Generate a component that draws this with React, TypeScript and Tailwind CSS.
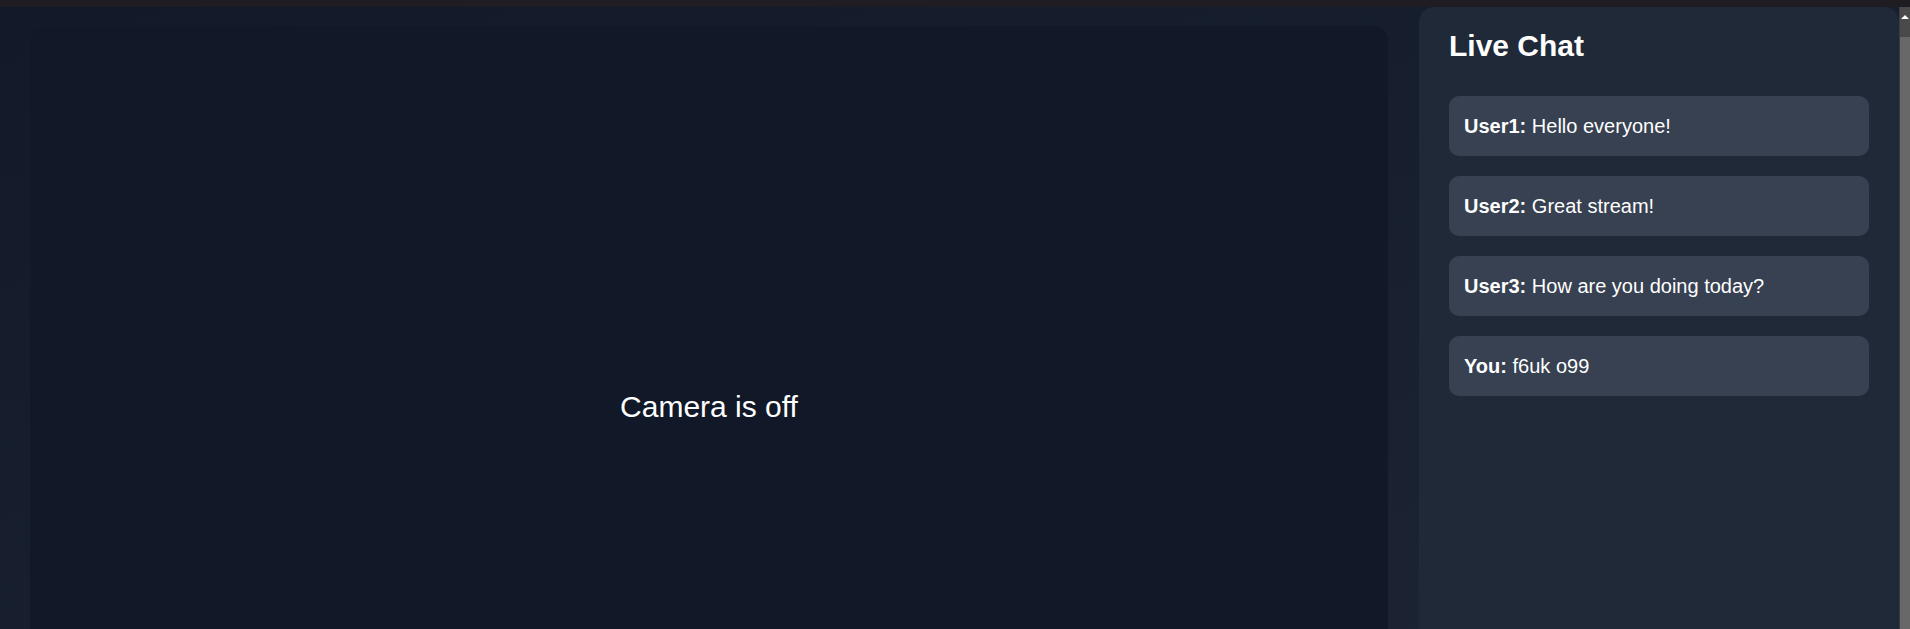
import React from "react";

const messages = [
  { user: "User1", text: "Hello everyone!" },
  { user: "User2", text: "Great stream!" },
  { user: "User3", text: "How are you doing today?" },
  { user: "You", text: "f6uk o99" },
];

export default function App() {
  return (
    <div
      className="h-[629px] w-full flex flex-col overflow-hidden text-white"
      style={{ fontFamily: '"Liberation Sans", Arial, sans-serif' }}
    >
      {/* window edge */}
      <div className="h-[7px] shrink-0 bg-[#1f1d21]" />

      <div className="flex flex-1 min-h-0">
        <main className="flex flex-1 items-start gap-[31px] pl-[30px] bg-gradient-to-br from-[#121a2a] to-[#1d2534] overflow-hidden">
          {/* Camera view */}
          <section className="mt-[19px] h-[762px] flex-1 rounded-[15px] bg-[#111827] flex items-center justify-center">
            <p className="text-[30px] leading-[36px]">Camera is off</p>
          </section>

          {/* Chat */}
          <aside className="w-[480px] shrink-0 h-[900px] rounded-t-[15px] bg-[#1f2937] px-[30px] pt-[19px]">
            <h2 className="text-[30px] leading-[40px] font-bold mb-[30px]">Live Chat</h2>
            <div className="flex flex-col gap-[20px]">
              {messages.map((m) => (
                <div
                  key={m.user}
                  className="rounded-[10px] bg-[#374151] p-[15px] text-[20px] leading-[30px]"
                >
                  <span className="font-bold">{m.user}:</span> {m.text}
                </div>
              ))}
            </div>
          </aside>
        </main>

        {/* scrollbar */}
        <div className="w-[11px] shrink-0 flex flex-col bg-[#4a4a4a] border-l border-[#3c3c3c]">
          <div className="h-[30px] flex justify-center pt-[8px]">
            <div className="w-0 h-0 border-l-[4px] border-r-[4px] border-b-[4px] border-l-transparent border-r-transparent border-b-white" />
          </div>
          <div className="flex-1 bg-[#686868]" />
        </div>
      </div>
    </div>
  );
}
